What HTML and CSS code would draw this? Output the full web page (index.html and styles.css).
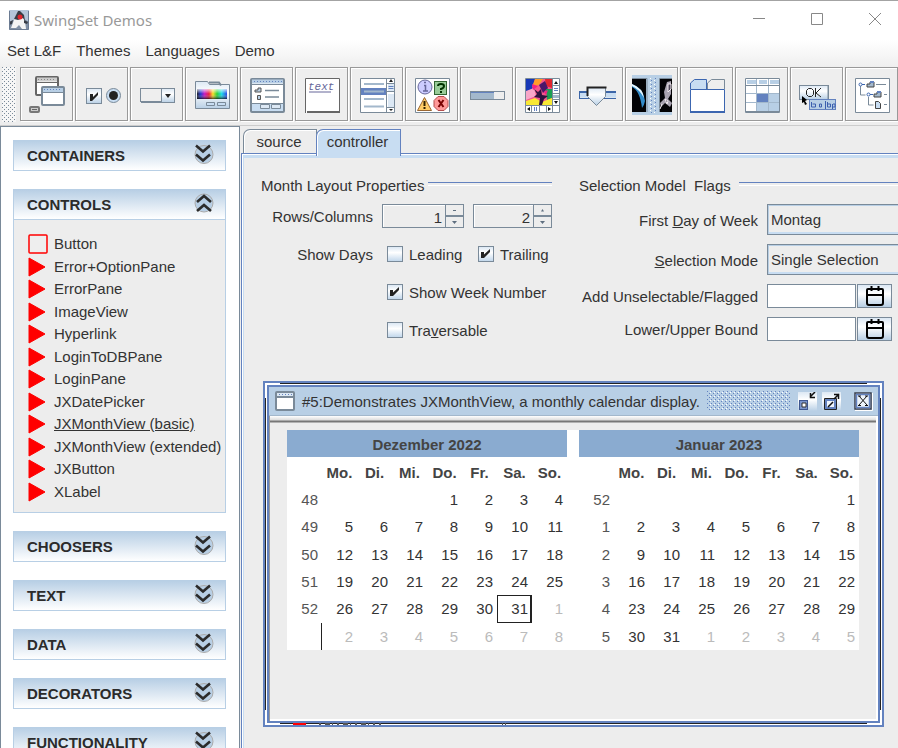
FILE: index.html
```html
<!DOCTYPE html>
<html lang="en">
<head>
<meta charset="utf-8">
<title>SwingSet Demos</title>
<link rel="stylesheet" href="styles.css">
</head>
<body>
<svg class="defs" aria-hidden="true">
  <defs>
    <linearGradient id="gMetal" x1="0" y1="0" x2="0" y2="1"><stop offset="0" stop-color="#dce8f4"/><stop offset=".4" stop-color="#fff"/><stop offset="1" stop-color="#b8cfe5"/></linearGradient>
    <linearGradient id="gRain"><stop offset="0" stop-color="#16161a"/><stop offset=".12" stop-color="#1a2fd0"/><stop offset=".25" stop-color="#c010c0"/><stop offset=".4" stop-color="#f01830"/><stop offset=".53" stop-color="#f8e020"/><stop offset=".67" stop-color="#20d030"/><stop offset=".82" stop-color="#10d8e8"/><stop offset="1" stop-color="#2040e8"/></linearGradient>
    <linearGradient id="gFade" x1="0" y1="0" x2="0" y2="1"><stop offset="0" stop-color="#fff" stop-opacity=".75"/><stop offset=".5" stop-color="#fff" stop-opacity="0"/><stop offset="1" stop-color="#000" stop-opacity=".7"/></linearGradient>
    <symbol id="down" viewBox="0 0 20 20"><circle cx="10" cy="10.500" r="9" fill="#b8cfe5" stroke="#aaa"/><path d="M2 1.500l7 6 7-6M2 10.500l7 6 7-6" fill="none" stroke="#2b2b2b" stroke-width="2.600"/></symbol>
    <symbol id="up" viewBox="0 0 20 20"><circle cx="10" cy="10" r="9" fill="#b8cfe5" stroke="#aaa"/><path d="M3 9l7-6 7 6M3 18l7-6 7 6" fill="none" stroke="#2b2b2b" stroke-width="2.600"/></symbol>
    <symbol id="play" viewBox="0 0 20 20"><path d="M1 1L17 10 1 19z" fill="#f00" stroke="#f00" stroke-linejoin="round"/></symbol>
    <symbol id="cal" viewBox="0 0 20 20"><path d="M3 3h14q1 0 1 1v13q0 2-2 2H4q-2 0-2-2V4q0-1 1-1zM2 9h16M6.500 0v5M13.500 0v5" fill="none" stroke="#000" stroke-width="2"/></symbol>
  </defs>
</svg>

<header class="titlebar">
  <svg class="app-icon" viewBox="0 0 20 20"><rect width="20" height="20" fill="#8190a5"/><path d="M0 0h20v12L12 7 6 9 0 13z" fill="#b4c5d8"/><path d="M9 1l-4 9-3 8h5l3-3 3 4h4l-1-8-5-8z" fill="#f4f4f4"/><path d="M9 1l-4 8 4 1 5-2 2 3-1-6-4-4zM0 12l4-2-1 4-3 1zM15 10l4 2-1 2-3-1z" fill="#383d46"/><circle cx="11" cy="7" r="2.500" fill="#e0252b"/><path d="M1 19.500h18M.5 1v18M19.500 1v18" stroke="#6b7b92"/></svg>
  <h1>SwingSet Demos</h1>
  <div class="window-controls">
    <button aria-label="Minimize"><svg viewBox="0 0 12 12"><path d="M0 5.500h12"/></svg></button>
    <button aria-label="Maximize"><svg viewBox="0 0 12 12"><path d="M.5.500h11v11H.5z"/></svg></button>
    <button aria-label="Close"><svg viewBox="0 0 12 12"><path d="M0 0l12 12M12 0L0 12"/></svg></button>
  </div>
</header>

<nav class="menubar">
  <button>Set L&amp;F</button><button>Themes</button><button>Languages</button><button>Demo</button>
</nav>

<div class="toolbar">
  <div class="grip"></div>
  <button aria-label="Internal frames"><svg viewBox="0 0 53 54"><rect x="16" y="10" width="22" height="18" rx="1" fill="#fff" stroke="#666" stroke-width="2"/><path d="M17 12.500h20" stroke="#ccc" stroke-width="4"/><path d="M18 12.500h18" stroke="#888" stroke-dasharray="1 2"/><path d="M15 15.500h24" stroke="#666"/><rect x="22" y="20" width="22" height="18" rx="1" fill="#fff" stroke="#7a8a99" stroke-width="2"/><path d="M23 23h20" stroke="#b8cfe5" stroke-width="4"/><path d="M24 22.500h18" stroke="#6382bf" stroke-dasharray="1 2"/><path d="M22 25.500h22" stroke="#7a8a99"/><rect x="10" y="40" width="9" height="5" rx="1" fill="#ccc" stroke="#777" stroke-width="2"/><path d="M12 42.500h5" stroke="#666"/></svg></button>
  <button aria-label="Buttons"><svg viewBox="0 0 53 54"><rect x="11.500" y="21.500" width="15" height="15" fill="url(#gMetal)" stroke="#7a8a99"/><path d="M15 27h3v3l5-5v3l-6 6h-2z" fill="#222"/><circle cx="38.500" cy="28.500" r="7" fill="#c8ddf2" stroke="#7a8a99"/><circle cx="38.500" cy="28.500" r="4.500" fill="#222"/></svg></button>
  <button aria-label="Combo box"><svg viewBox="0 0 53 54"><rect x="10.500" y="21.500" width="34" height="13" fill="#eee" stroke="#7a8a99"/><path d="M11 35.500h34" stroke="#7a8a99"/><rect x="31.500" y="21.500" width="13" height="14" fill="url(#gMetal)" stroke="#7a8a99"/><path d="M35 27h6l-3 4z" fill="#222"/></svg></button>
  <button aria-label="Color chooser"><svg viewBox="0 0 53 54"><path d="M10.500 41.500V14.500h12l2 3h20v24z" fill="url(#gMetal)" stroke="#7a8a99"/><path d="M24 15.500h10l2 3" fill="none" stroke="#7a8a99" stroke-width="2"/><rect x="12" y="22" width="30" height="10" fill="url(#gRain)"/><rect x="12" y="22" width="30" height="10" fill="url(#gFade)"/><path d="M21.500 35.500h8v3h-8zM32.500 35.500h8v3h-8z" fill="#c8ddf2" stroke="#7a8a99"/></svg></button>
  <button aria-label="File chooser"><svg viewBox="0 0 53 54"><rect x="11" y="12" width="33" height="33" rx="1" fill="#fff" stroke="#7a8a99" stroke-width="2"/><path d="M12 14.500h31" stroke="#b8cfe5" stroke-width="4"/><path d="M14 14.500h28" stroke="#6382bf" stroke-dasharray="1 2"/><path d="M12 17.500h31" stroke="#7a8a99"/><path d="M12 37h31v7H12z" fill="#c8ddf2"/><path d="M12 36.500h31" stroke="#7a8a99"/><path d="M20.500 37.500h9v4h-9zM31.500 37.500h9v4h-9z" fill="#dce8f4" stroke="#7a8a99"/><path d="M15 23h3v-2h3v4h-6zM17.500 28.500h3v4h-3z" fill="#b8cfe5" stroke="#555"/><path d="M25 23.500h14M25 30h14" stroke="#7a8a99" stroke-width="1.500"/></svg></button>
  <button aria-label="HTML text"><svg viewBox="0 0 53 54"><path d="M10 11h35v35H10z" fill="#fff"/><path d="M10.500 46V11.500h34V46" fill="none" stroke="#666"/><path d="M12 45h33" stroke="#666" stroke-width="2"/><text x="13" y="23" class="script-text">text</text><path d="M14 25h22" stroke="#666699"/></svg></button>
  <button aria-label="List"><svg viewBox="0 0 53 54"><path d="M10.500 11.500h34v34h-34z" fill="#fff" stroke="#7a8a99"/><path d="M11 21h26v7H11z" fill="#6382bf"/><path d="M14 17h20M14 24.500h20M14 32h20M14 39.500h20" stroke="#a3b8cc" stroke-width="2"/><path d="M36.500 12v33M37 16.500h8M37 24.500h8M37 40.500h8" stroke="#7a8a99"/><path d="M38 17h6v7h-6zM38 27h6v13h-6z" fill="#dce8f4"/><path d="M38.500 19.500h5M38.500 21.500h5" stroke="#6382bf"/><path d="M39 15h4l-2-3zM39 42h4l-2 2z" fill="#222"/></svg></button>
  <button aria-label="Option pane"><svg viewBox="0 0 53 54"><path d="M10.500 11.500h34v34h-34z" fill="#fff" stroke="#7a8a99"/><circle cx="20" cy="20" r="7" fill="#ccf" stroke="#669"/><path d="M19 18.500h1.500V24M18 24h5M19 15.500h2" stroke="#669" stroke-width="1.500" fill="none"/><rect x="29.500" y="14.500" width="12" height="13" fill="#9c9" stroke="#363"/><path d="M33 19q0-2 3-2t3 2-3 3v1M36 24v2" stroke="#030" stroke-width="2" fill="none"/><path d="M19.500 30.500l7 13h-14z" fill="#fc6" stroke="#963"/><path d="M19.500 34v5M19.500 40v2" stroke="#320" stroke-width="2"/><path d="M33 29.500h6l4 4v6l-4 4h-6l-4-4v-6z" fill="#f99" stroke="#b34d4d"/><path d="M33.500 33l5 7M38.500 33l-5 7" stroke="#700" stroke-width="2"/></svg></button>
  <button aria-label="Progress bar"><svg viewBox="0 0 53 54"><rect x="10.500" y="24.500" width="34" height="8" fill="#eee" stroke="#7a8a99" stroke-width="1"/><path d="M11 25h23v7H11z" fill="#a3b8cc"/><path d="M11 25.500h23" stroke="#6382bf"/></svg></button>
  <button aria-label="Scroll pane"><svg viewBox="0 0 53 54"><path d="M10.500 11.500h34v34h-34z" fill="#eee" stroke="#7a8a99"/><path d="M11 12h26v26H11z" fill="#f4578c"/><path d="M11 12h9l-3 10-6 3z" fill="#1738b6"/><path d="M20 12h8l-4 6-7 2z" fill="#ff9c28"/><path d="M30 12h7v9l-6-2z" fill="#e2262f"/><path d="M24 18l6-4 3 7-5 5z" fill="#4b1769"/><path d="M11 24l8-3 2 8-10 4z" fill="#f7a6c8"/><path d="M31 22h6v9l-5 2z" fill="#1b9f54"/><path d="M11 34l9-3 7 4 10-4v7H11z" fill="#f9e934"/><path d="M19 22l4 3 3-3 1 6 6 1-4 3-2 6h-3l1-7-6-1 3-3z" fill="#30113f"/><path d="M17 17l6 2-5 4zM29 25l4-2-2 5z" fill="#f41f86"/><path d="M37 12h7v33h-7zM11 38h33v7H11z" fill="#fff"/><path d="M37.500 12v33M11 38.500h33M37 18.500h7M37 26.500h7M37 32.500h7M16.500 38v7M24.500 38v7M31.500 38v7" stroke="#7a8a99"/><path d="M39 17h4l-2-3zM39 34h4l-2 3zM15 40v4l-3-2zM33 40v4l3-2z" fill="#111"/><path d="M39 21.500h4M39 23.500h4M19.500 40v4M21.500 40v4" stroke="#6382bf"/><path d="M38 28h6v3h-6z" fill="#a3b8cc"/></svg></button>
  <button aria-label="Slider"><svg viewBox="0 0 53 54"><path d="M9 24.500h37v6H9z" fill="#c8ddf2"/><path d="M9 25h37" stroke="#3c66a8" stroke-width="2"/><path d="M9 31.500h37M9.500 24v7" stroke="#3c66a8"/><path d="M17.500 20.500h18v9l-9 9-9-9z" fill="url(#gMetal)" stroke="#7a8a99"/><path d="M17.500 29v-8.500h19" fill="none" stroke="#222" stroke-width="2"/></svg></button>
  <button aria-label="Split pane"><svg viewBox="0 0 53 54"><path d="M7 8h40v40H7z" fill="#b8cfe5"/><path d="M7 12h14v33H7zM34 12h13v33H34z" fill="#020205"/><path d="M7 11.500h15V45M34.500 45V11.500H47" fill="none" stroke="#7a8a99"/><path d="M7 17q12 5 13 17-1 5-3 7-2-17-10-21z" fill="#338bc9"/><path d="M7 17q11 4 12 14-5-9-12-12z" fill="#e7f7ff"/><path d="M42 15l4-1v13l-3 5 4 4-2 4-5-4-4 4-1-4 5-5-1-6z" fill="#a9a3b1"/><path d="M43 17h3v5l-3 3zM40 32l3 2-1 3zM37 37l-2 5" stroke="#f4edf2" fill="#4c4559"/><path d="M25.500 11v35M29.500 13v33" stroke="#fff" stroke-dasharray="1 3"/><path d="M26.500 13v33M30.500 11v35" stroke="#6382bf" stroke-dasharray="1 3"/></svg></button>
  <button aria-label="Tabbed pane"><svg viewBox="0 0 53 54"><path d="M27.500 22v-6l4-3.500h13V22" fill="#eee" stroke="#7a8a99"/><path d="M10.500 22v-6l4-3.500h12V22" fill="#c8ddf2" stroke="#3c66b0"/><path d="M10.500 22.500h34v22h-34z" fill="#fff" stroke="#3c66b0"/><path d="M10 45h35" stroke="#3c66b0" stroke-width="2"/></svg></button>
  <button aria-label="Table"><svg viewBox="0 0 53 54"><path d="M10 11h35v35H10z" fill="#fff"/><path d="M12 13h9v4h-9zM24 13h8v4h-8zM35 13h9v4h-9zM22 36h11v8H22zM34 27h10v17H34z" fill="#b8cfe5"/><path d="M11 18.500h33M11 26.500h33M11 35.500h33M21.500 12v33M33.500 12v33" stroke="#a3b8cc"/><path d="M22 27h11v8H22z" fill="#6382bf"/><path d="M10.500 11.500h34v34h-34zM11 18.500h33M11 44.500h33" fill="none" stroke="#7a8a99"/></svg></button>
  <button aria-label="Tool tips"><svg viewBox="0 0 53 54"><rect x="9.500" y="18.500" width="29" height="14" fill="url(#gMetal)" stroke="#7a8a99"/><path d="M10 32.500h29M38 19v14" stroke="#7a8a99"/><path d="M18.500 21.500h3l2 2v4l-2 2h-3l-2-2v-4zM25.500 21v9M31 21l-5 5 5 4" fill="none" stroke="#222"/><rect x="19.500" y="32.500" width="26" height="10" fill="#b8cfe5" stroke="#6382bf"/><path d="M21.500 35v5h4v-3h-3M29.500 37h2v3h-2zM35.500 34v8M37.500 35v5h3v-3h-3M42.500 37v5M43 37h2v3h-2" fill="none" stroke="#3c5fae"/><path d="M12 29l5 4-2 1 2 3-2 1-1-3-2 1z" fill="#000"/></svg></button>
  <button aria-label="Tree"><svg viewBox="0 0 53 54"><path d="M10.500 11.500h34v34h-34z" fill="#fff" stroke="#7a8a99"/><path d="M15.500 19v9h5M23.500 30v8h5M31 17.500h10M39 27.500h3M39 37.500h3" fill="none" stroke="#7a8a99"/><circle cx="15.500" cy="17.500" r="1.500" fill="#fff" stroke="#3c66b0"/><circle cx="23.500" cy="27.500" r="1.500" fill="#fff" stroke="#3c66b0"/><path d="M17 17.500h3M25 27.500h3" stroke="#3c66b0"/><path d="M22 17h3v-2h4v5h-7zM29 27h3v-2h4v5h-7z" fill="#a3b8cc" stroke="#444"/><path d="M25 14h4v2h-4zM32 24h4v2h-4z" fill="#6382bf"/><path d="M30.500 34.500h3l2 2v5h-5z" fill="#c8ddf2" stroke="#444"/></svg></button>
</div>

<main class="split">
  <aside class="sidebar">
    <section class="task"><h2><button>CONTAINERS<svg><use href="#down"/></svg></button></h2></section>
    <section class="task"><h2><button>CONTROLS<svg><use href="#up"/></svg></button></h2>
      <ul class="demos">
        <li><a href="#b"><svg viewBox="0 0 20 20"><rect x="1" y="1" width="18" height="18" rx="1" fill="#eee" stroke="#f00" stroke-width="1.500"/></svg>Button</a></li>
        <li><a href="#b"><svg><use href="#play"/></svg>Error+OptionPane</a></li>
        <li><a href="#b"><svg><use href="#play"/></svg>ErrorPane</a></li>
        <li><a href="#b"><svg><use href="#play"/></svg>ImageView</a></li>
        <li><a href="#b"><svg><use href="#play"/></svg>Hyperlink</a></li>
        <li><a href="#b"><svg><use href="#play"/></svg>LoginToDBPane</a></li>
        <li><a href="#b"><svg><use href="#play"/></svg>LoginPane</a></li>
        <li><a href="#b"><svg><use href="#play"/></svg>JXDatePicker</a></li>
        <li><a href="#b" class="current"><svg><use href="#play"/></svg>JXMonthView (basic)</a></li>
        <li><a href="#b"><svg><use href="#play"/></svg>JXMonthView (extended)</a></li>
        <li><a href="#b"><svg><use href="#play"/></svg>JXButton</a></li>
        <li><a href="#b"><svg><use href="#play"/></svg>XLabel</a></li>
      </ul>
    </section>
    <section class="task"><h2><button>CHOOSERS<svg><use href="#down"/></svg></button></h2></section>
    <section class="task"><h2><button>TEXT<svg><use href="#down"/></svg></button></h2></section>
    <section class="task"><h2><button>DATA<svg><use href="#down"/></svg></button></h2></section>
    <section class="task"><h2><button>DECORATORS<svg><use href="#down"/></svg></button></h2></section>
    <section class="task"><h2><button>FUNCTIONALITY<svg><use href="#down"/></svg></button></h2></section>
  </aside>

  <div class="work">
    <div class="tabs" role="tablist">
      <button role="tab">source</button><button role="tab" class="selected">controller</button>
    </div>
    <div class="pane">
      <form class="form">
        <section class="group layout-group">
          <h3>Month Layout Properties</h3>
          <div class="layout-grid">
            <label class="name" for="rows">Rows/Columns</label>
            <div class="spinner"><input id="rows" type="text" value="1"><div class="steps"><button type="button" aria-label="More rows"><svg viewBox="0 0 5 3"><path d="M1 1h3v1H1z"/></svg></button><button type="button" aria-label="Fewer rows"><svg viewBox="0 0 5 3"><path d="M0 0h5L2.500 3z"/></svg></button></div></div>
            <div class="spinner"><input aria-label="Columns" type="text" value="2"><div class="steps"><button type="button" aria-label="More columns"><svg viewBox="0 0 5 3"><path d="M1 2.500h3L2.500 0z"/></svg></button><button type="button" aria-label="Fewer columns"><svg viewBox="0 0 5 3"><path d="M0 0h5L2.500 3z"/></svg></button></div></div>
            <span class="name">Show Days</span>
            <label class="check"><input type="checkbox"><span>Leading</span></label>
            <label class="check"><input type="checkbox" checked><span>Trailing</span></label>
            <label class="check wide"><input type="checkbox" checked><span>Show Week Number</span></label>
            <label class="check wide"><input type="checkbox"><span>Tra<u>v</u>ersable</span></label>
          </div>
        </section>
        <section class="group model-group">
          <h3>Selection Model&nbsp; Flags</h3>
          <div class="model-grid">
            <label for="first">First <u>D</u>ay of Week</label>
            <select id="first"><option>Montag</option></select>
            <label for="mode"><u>S</u>election Mode</label>
            <select id="mode"><option>Single Selection</option></select>
            <label for="flag">Add Unselectable/Flagged</label>
            <div class="picker"><input id="flag" type="text"><button type="button" aria-label="Pick date"><svg><use href="#cal"/></svg></button></div>
            <label for="bound">Lower/Upper Bound</label>
            <div class="picker"><input id="bound" type="text"><button type="button" aria-label="Pick bound"><svg><use href="#cal"/></svg></button></div>
          </div>
        </section>
      </form>

      <section class="frame">
        <div class="frame-inner">
          <header class="frame-title">
            <svg class="frame-icon" viewBox="0 0 20 20"><rect x="1" y="1" width="18" height="18" rx="1" fill="#fff" stroke="#7a8a99" stroke-width="2"/><path d="M2 3.500h16" stroke="#dce8f4" stroke-width="3"/><path d="M4 3.500h13" stroke="#6382bf" stroke-dasharray="1 2"/><path d="M2 6h16" stroke="#7a8a99" stroke-width="2"/></svg>
            <h2>#5:Demonstrates JXMonthView, a monthly calendar display.</h2>
            <div class="bumps"></div>
            <div class="frame-buttons">
              <button aria-label="Iconify"><svg viewBox="0 0 19 19"><path d="M0 0h19v19H0z" fill="url(#gMetal)"/><path d="M1 8h9v10H1z" fill="#3d568f"/><path d="M2 9h7v8H2z" fill="#7994cb"/><path d="M4 11h4v4H4z" fill="#fff" stroke="#333"/><path d="M17 0l-5 5M12.500 1v4.500H17" fill="none" stroke="#111" stroke-width="1.500"/></svg></button>
              <button aria-label="Maximize frame"><svg viewBox="0 0 19 19"><path d="M0 0h19v19H0z" fill="url(#gMetal)"/><path d="M2.500 6.500h12v11h-12z" fill="#fff" stroke="#222"/><path d="M4 8h9v8H4z" fill="#eef4fb" stroke="#6382bf" stroke-width="2"/><path d="M6 15l5-5M12 7l5-5M12 2.500h4.500V7" fill="none" stroke="#111" stroke-width="1.500"/></svg></button>
              <button class="close" aria-label="Close frame"><svg viewBox="0 0 19 19"><path d="M1 1h16v16H1z" fill="#fff" stroke="#3a3f4c" stroke-width="1.500"/><path d="M2.500 2.500h13v13h-13z" fill="#eef4fb" stroke="#6382bf" stroke-width="1.500"/><path d="M5 4l8 9M13 4l-8 9M4 4h3M11 4h3M4 13.500h3M11 13.500h3" stroke="#111"/><path d="M18.500 1v17.500H1" fill="none" stroke="#fff"/></svg></button>
            </div>
          </header>
          <div class="frame-body">
            <div class="months">
              <table>
                <thead><tr><th colspan="8" class="month">Dezember 2022</th></tr>
                <tr><th></th><th>Mo.</th><th>Di.</th><th>Mi.</th><th>Do.</th><th>Fr.</th><th>Sa.</th><th>So.</th></tr></thead>
                <tbody>
                <tr><td class="week">48</td><td></td><td></td><td></td><td>1</td><td>2</td><td>3</td><td>4</td></tr>
                <tr><td class="week">49</td><td>5</td><td>6</td><td>7</td><td>8</td><td>9</td><td>10</td><td>11</td></tr>
                <tr><td class="week">50</td><td>12</td><td>13</td><td>14</td><td>15</td><td>16</td><td>17</td><td>18</td></tr>
                <tr><td class="week">51</td><td>19</td><td>20</td><td>21</td><td>22</td><td>23</td><td>24</td><td>25</td></tr>
                <tr><td class="week">52</td><td>26</td><td>27</td><td>28</td><td>29</td><td>30</td><td class="today">31</td><td class="out">1</td></tr>
                <tr><td class="week rule"></td><td class="out">2</td><td class="out">3</td><td class="out">4</td><td class="out">5</td><td class="out">6</td><td class="out">7</td><td class="out">8</td></tr>
                </tbody>
              </table>
              <table>
                <thead><tr><th colspan="8" class="month">Januar 2023</th></tr>
                <tr><th></th><th>Mo.</th><th>Di.</th><th>Mi.</th><th>Do.</th><th>Fr.</th><th>Sa.</th><th>So.</th></tr></thead>
                <tbody>
                <tr><td class="week">52</td><td></td><td></td><td></td><td></td><td></td><td></td><td>1</td></tr>
                <tr><td class="week">1</td><td>2</td><td>3</td><td>4</td><td>5</td><td>6</td><td>7</td><td>8</td></tr>
                <tr><td class="week">2</td><td>9</td><td>10</td><td>11</td><td>12</td><td>13</td><td>14</td><td>15</td></tr>
                <tr><td class="week">3</td><td>16</td><td>17</td><td>18</td><td>19</td><td>20</td><td>21</td><td>22</td></tr>
                <tr><td class="week">4</td><td>23</td><td>24</td><td>25</td><td>26</td><td>27</td><td>28</td><td>29</td></tr>
                <tr><td class="week">5</td><td>30</td><td>31</td><td class="out">1</td><td class="out">2</td><td class="out">3</td><td class="out">4</td><td class="out">5</td></tr>
                </tbody>
              </table>
            </div>
          </div>
        </div>
        <svg class="residue" viewBox="0 0 220 2"><path d="M2 0h13v2H2z" fill="#f00"/><path d="M28 1h62" stroke="#555" stroke-width="2" stroke-dasharray="2 4 5 2 1 4"/><path d="M211 1h5" stroke="#555" stroke-width="2" stroke-dasharray="1 2"/></svg>
      </section>
    </div>
  </div>
</main>
</body>
</html>
```
FILE: styles.css
```css
* { box-sizing: border-box; }

body {
  margin: 0;
  height: 100vh;
  display: flex;
  flex-direction: column;
  overflow: hidden;
  background: linear-gradient(#fff 40px, #ededed 70px);
  border-top: 1px solid #a3a3a3;
  color: #333;
  font: 15px/18px "Liberation Sans", Arial, sans-serif;
}

h1, h2, h3, ul { margin: 0; padding: 0; font-size: 15px; font-weight: normal; }
button, input, select { font: inherit; color: inherit; margin: 0; padding: 0; border: 0; border-radius: 0; background: none; }
svg { display: block; }
.defs { position: absolute; width: 0; height: 0; }

/* window title */
.titlebar { display: flex; align-items: center; height: 37px; padding-left: 9px; flex: none; }
.app-icon { width: 20px; height: 20px; }
.titlebar h1 { margin-left: 5px; font: 15px/20px "Noto Sans", sans-serif; color: #999; }
.window-controls { display: flex; gap: 12px; margin-left: auto; }
.window-controls button { width: 46px; height: 28px; padding-bottom: 2px; }
.window-controls svg { width: 12px; height: 12px; margin: 0 auto; fill: none; stroke: #888; }

.menubar { display: flex; gap: 15px; height: 26px; padding-left: 7px; flex: none; }

/* toolbar */
.toolbar { display: flex; gap: 2px; height: 62px; padding: 3px 0 3px 2px; flex: none; overflow: hidden; border-bottom: 1px solid #ccc; }
.toolbar button { flex: none; width: 53px; height: 54px; border: 1px solid #999; box-shadow: inset 1px 1px #fff, 1px 1px #fff; background: #eee; }
.toolbar button svg { width: 53px; height: 54px; margin: -1px; }
.grip {
  flex: none; width: 14px; height: 55px; margin-right: 2px;
  background:
    conic-gradient(from 270deg at 1px 1px, #7a8a99 90deg, transparent 0) 0 0 / 4px 4px,
    conic-gradient(from 270deg at 1px 1px, #7a8a99 90deg, transparent 0) 2px 2px / 4px 4px,
    #f6f6f6;
}
.script-text { font: italic 11px "Liberation Mono", monospace; fill: #666699; }

/* split */
.split { display: flex; flex: 1; min-height: 0; background: #ededed; }
.sidebar {
  flex: none; width: 240px; padding: 13px 13px 0 12px; overflow: hidden;
  display: flex; flex-direction: column; gap: 18px;
  background: #fff; border: solid #7a8a99; border-width: 1px 1px 0;
}
.task { flex: none; }
.task button {
  display: flex; align-items: center; justify-content: space-between; width: 100%; height: 31px;
  padding: 0 11px 0 13px; border: 1px solid #b8cfe5;
  background: linear-gradient(#b8cfe5, #fff); font-weight: bold; color: #2b2b2b;
}
.task button svg { width: 20px; height: 20px; margin-bottom: 4px; }
.demos {
  display: grid; grid-auto-rows: 1fr; height: 293px; padding: 14px 14px 8px; list-style: none;
  background: #ededed; border: 1px solid #b8cfe5; border-top: 0;
}
.demos a { display: flex; align-items: center; gap: 6px; color: inherit; text-decoration: none; white-space: nowrap; }
.demos svg { width: 20px; height: 20px; flex: none; }
.demos .current { text-decoration: underline; }

.work { flex: 1; min-width: 0; display: flex; flex-direction: column; padding-left: 1px; overflow: hidden; }
.tabs { display: flex; height: 27px; padding: 3px 0 0 2px; flex: none; }
.tabs button {
  width: 74px; height: 24px; padding: 0 2px 0 0; border: solid #7a8a99; border-width: 1px 1px 0;
  border-top-left-radius: 7px; box-shadow: inset 1px 1px #fff;
}
.tabs .selected { width: 85px; margin-left: -1px; height: 27px; padding-bottom: 3px; background: #c8ddf2; border-color: #6382bf; z-index: 1; }
.pane {
  flex: 1; display: flex; flex-direction: column; min-height: 0; border: solid #6382bf; border-width: 1px 0 0 1px;
  box-shadow: inset 1px 1px #fff, inset 2px 4px #c8ddf2;
}

/* property form */
.form { display: flex; gap: 27px; padding: 21px 0 0 19px; }
.group h3 { display: flex; align-items: center; height: 22px; white-space: nowrap; }
.group h3::after { content: ""; flex: 1; height: 2px; margin-left: 4px; margin-bottom: 4px; border-top: 1px solid #6382bf; border-bottom: 1px solid #fff; }
.layout-group { width: 291px; flex: none; }
.layout-grid { display: grid; grid-template-columns: 112px 82px 79px; grid-auto-rows: 38px; column-gap: 9px; align-items: center; }
.name { padding-top: 2px; text-align: right; }
.check { display: flex; align-items: center; gap: 6px; padding-left: 5px; white-space: nowrap; }
.check span { padding-top: 2px; }
.wide { grid-column: 2 / 4; }
.check input {
  appearance: none; width: 16px; height: 16px; flex: none; border: 1px solid #7a8a99;
  background: linear-gradient(#dce8f4, #fff 40%, #c3d8ec);
}
.check input:checked::after {
  content: ""; display: block; width: 10px; height: 10px; margin: 2px; background: #222;
  clip-path: polygon(0 30%, 30% 30%, 30% 55%, 90% 0, 90% 30%, 30% 90%, 0 90%);
}
.spinner { display: flex; height: 24px; }
.spinner input {
  flex: 1; min-width: 0; padding: 3px 3px 0 0; text-align: right; border: 1px solid #7a8a99; border-right: 0;
  box-shadow: inset 1px 1px #fff;
}
.steps { display: flex; flex-direction: column; width: 19px; border: 1px solid #7a8a99; }
.steps button { flex: 1; }
.steps button + button { border-top: 2px solid #7a8a99; }
.steps svg { width: 5px; height: 3px; margin: 0 auto; fill: #5f6f80; }

.model-group { flex: 1; min-width: 0; }
.model-group h3::after { margin-left: 8px; }
.model-grid { display: grid; grid-template-columns: 179px 1fr; gap: 9px; padding-top: 7px; align-items: center; }
.model-grid label { padding-top: 2px; text-align: right; white-space: nowrap; }
.model-grid select {
  appearance: none; width: 100%; height: 31px; padding: 1px 0 0 3px; border: solid #7a8a99; border-width: 1px 0 1px 1px;
  box-shadow: inset 1px 1px #b8cfe5, inset 0 -2px #c8ddf2;
}
.picker { display: flex; gap: 1px; height: 24px; }
.picker input { width: 89px; background: #fff; border: 1px solid #7a8a99; }
.picker button { width: 35px; border: 1px solid #7a8a99; background: linear-gradient(#dce8f4, #fff 40%, #b8cfe5); }
.picker svg { width: 20px; height: 20px; margin: 0 auto; }

/* floating calendar window */
.frame {
  position: relative; margin: 32px 14px 0 21px; padding: 2px; border: 2px solid #6382bf;
  background:
    linear-gradient(#222, #222) top / calc(100% - 30px) 1px no-repeat,
    linear-gradient(#222, #222) bottom 1px center / calc(100% - 30px) 1px no-repeat,
    linear-gradient(#222, #222) left / 1px calc(100% - 30px) no-repeat,
    linear-gradient(#222, #222) right 1px center / 1px calc(100% - 30px) no-repeat,
    #fff;
}
.frame-inner { border: 2px solid #6382bf; background: #ededed; }
.frame-title { display: flex; align-items: center; height: 29px; padding: 0 5px 0 6px; background: #b8cfe5; border-bottom: 1px solid #a3b8cc; }
.frame-icon { width: 20px; height: 20px; flex: none; }
.frame-title h2 { margin-left: 7px; padding-top: 2px; white-space: nowrap; }
.bumps {
  flex: 1; height: 20px; margin: 0 8px 0 7px;
  background:
    conic-gradient(from 270deg at 1px 1px, #6382bf 90deg, transparent 0) 0 0 / 4px 4px,
    conic-gradient(from 270deg at 1px 1px, #6382bf 90deg, transparent 0) 2px 2px / 4px 4px,
    conic-gradient(from 270deg at 1px 1px, #fff 90deg, transparent 0) 3px 1px / 4px 4px;
}
.frame-buttons { display: flex; gap: 5px; }
.frame-buttons svg { width: 19px; height: 19px; }
.frame-buttons .close { margin-left: 8px; }
.frame-body {
  height: 305px; padding: 14px 19px 0 17px; border: solid #999; border-width: 0 0 0 1px;
  background: linear-gradient(#fff, #ddd 4px, #777 5px, #777 6px, #ededed 7px);
  box-shadow: inset -2px -2px #fff;
}
.months { display: flex; gap: 12px; background: #fff; }
.months table { flex: 1; width: 100%; height: 220px; table-layout: fixed; border-collapse: separate; border-spacing: 0; }
.months th { height: 29px; padding: 2px 0 0; line-height: 18px; color: #444; }
.months .month { height: 27px; background: #8aabd0; }
.months td { padding: 1px 4px 0 0; text-align: right; line-height: 18px; }
.months .week { color: #555; }
.months .out { color: #bbb; }
.months .today { box-shadow: inset 1px 1px #222, inset -2px -1px #222; }
.months .rule { box-shadow: inset -1px 0 #222; }
.residue { position: absolute; left: 26px; bottom: 0; width: 220px; height: 2px; }
```
